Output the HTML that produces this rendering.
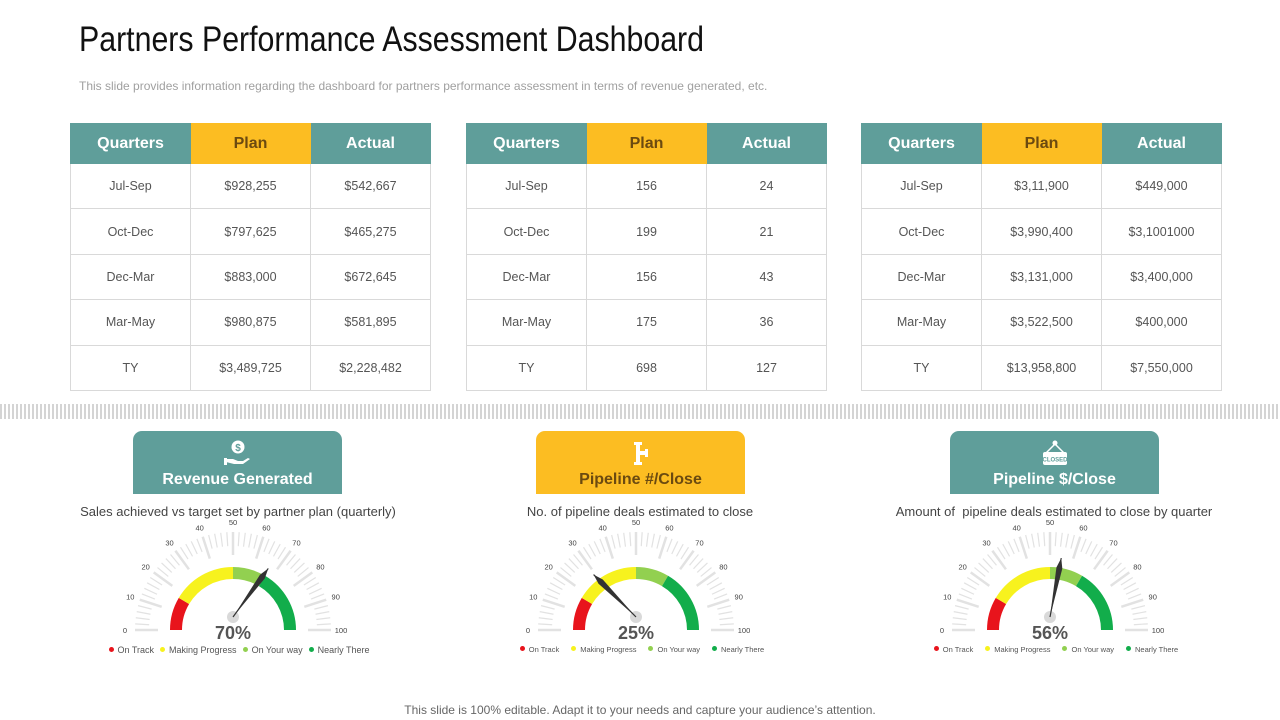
<!DOCTYPE html>
<html><head><meta charset="utf-8">
<style>
*{margin:0;padding:0;box-sizing:border-box}
body{width:1280px;height:720px;background:#fff;font-family:"Liberation Sans",sans-serif;position:relative;overflow:hidden}
.abs{position:absolute}
h1{position:absolute;left:79px;top:20px;font-weight:normal;font-size:35px;color:#111;white-space:nowrap;transform:scaleX(0.866);transform-origin:left top}
.sub{left:79px;top:79px;font-size:12px;color:#a0a0a0;white-space:nowrap}
table{position:absolute;border-collapse:collapse;width:361px;top:123px}
td,th{width:120px;text-align:center;border:1px solid #d9d9d9;font-size:12.5px;color:#555;height:45.4px}
th{height:40px;font-size:16px;font-weight:bold;color:#fff;background:#5f9e9a;border:1px solid #5f9e9a}
th.p{background:#fcbd22;color:#6b4a10;border-color:#fcbd22}
.stripe{left:0;top:404px;width:1280px;height:15px;background:repeating-linear-gradient(90deg,#d4d4d4 0 2px,#fff 2px 4px)}
.card{top:431px;width:209px;height:63px;border-radius:9px 9px 0 0;background:#5f9e9a;color:#fff;font-weight:bold;font-size:16px;text-align:center}
.card span{position:absolute;left:0;right:0;top:40px}
.card svg{position:absolute;left:50%;top:9px;transform:translateX(-50%)}
.desc{top:504px;font-size:13px;color:#444;text-align:center;white-space:nowrap}
.foot{left:0;width:1280px;top:703px;text-align:center;font-size:12px;color:#666}
</style></head><body>
<h1>Partners Performance Assessment Dashboard</h1>
<div class="abs sub">This slide provides information regarding the dashboard for partners performance assessment in terms of revenue generated, etc.</div>

<table style="left:70px"><tr><th>Quarters</th><th class="p">Plan</th><th>Actual</th></tr>
<tr><td>Jul-Sep</td><td>$928,255</td><td>$542,667</td></tr>
<tr><td>Oct-Dec</td><td>$797,625</td><td>$465,275</td></tr>
<tr><td>Dec-Mar</td><td>$883,000</td><td>$672,645</td></tr>
<tr><td>Mar-May</td><td>$980,875</td><td>$581,895</td></tr>
<tr><td>TY</td><td>$3,489,725</td><td>$2,228,482</td></tr></table>
<table style="left:466px"><tr><th>Quarters</th><th class="p">Plan</th><th>Actual</th></tr>
<tr><td>Jul-Sep</td><td>156</td><td>24</td></tr>
<tr><td>Oct-Dec</td><td>199</td><td>21</td></tr>
<tr><td>Dec-Mar</td><td>156</td><td>43</td></tr>
<tr><td>Mar-May</td><td>175</td><td>36</td></tr>
<tr><td>TY</td><td>698</td><td>127</td></tr></table>
<table style="left:861px"><tr><th>Quarters</th><th class="p">Plan</th><th>Actual</th></tr>
<tr><td>Jul-Sep</td><td>$3,11,900</td><td>$449,000</td></tr>
<tr><td>Oct-Dec</td><td>$3,990,400</td><td>$3,1001000</td></tr>
<tr><td>Dec-Mar</td><td>$3,131,000</td><td>$3,400,000</td></tr>
<tr><td>Mar-May</td><td>$3,522,500</td><td>$400,000</td></tr>
<tr><td>TY</td><td>$13,958,800</td><td>$7,550,000</td></tr></table>

<div class="abs stripe"></div>

<div class="abs card" style="left:133px">
<svg width="30" height="28" viewBox="0 0 30 28"><circle cx="15" cy="7" r="6.5" fill="#fff"/><text x="15" y="11" font-size="10" text-anchor="middle" fill="#5f9e9a" font-family="Liberation Sans" font-weight="bold">$</text><path d="M3 19h7l5 2h5l5-3 2 1-7 5h-9l-8-2z" fill="#fff"/><rect x="1" y="18" width="3" height="7" fill="#fff"/></svg>
<span>Revenue Generated</span></div>
<div class="abs card" style="left:536px;background:#fcbd22;color:#6b4a10">
<svg width="30" height="28" viewBox="0 0 30 28"><rect x="8" y="2" width="8" height="3" fill="#fff"/><rect x="10" y="5" width="4" height="18" fill="#fff"/><rect x="8" y="22" width="8" height="3" fill="#fff"/><rect x="14" y="11" width="5" height="4" fill="#fff"/><rect x="19" y="9" width="3" height="8" fill="#fff"/></svg>
<span>Pipeline #/Close</span></div>
<div class="abs card" style="left:950px">
<svg width="30" height="28" viewBox="0 0 30 28"><circle cx="15" cy="3" r="2.5" fill="#fff"/><path d="M15 4L6 13M15 4L24 13" stroke="#fff" stroke-width="1.5"/><rect x="3" y="12" width="24" height="13" rx="2" fill="#fff"/><text x="15" y="21.5" font-size="6" text-anchor="middle" fill="#5f9e9a" font-family="Liberation Sans">CLOSED</text></svg>
<span>Pipeline $/Close</span></div>

<div class="abs desc" style="left:0;width:476px">Sales achieved vs target set by partner plan (quarterly)</div>
<div class="abs desc" style="left:440px;width:400px">No. of pipeline deals estimated to close</div>
<div class="abs desc" style="left:854px;width:400px">Amount of &nbsp;pipeline deals estimated to close by quarter</div>

<div id="g"></div>
<div class="abs foot">This slide is 100% editable. Adapt it to your needs and capture your audience’s attention.</div>

<script>
function gauge(cx,val){
 const W=260,H=150,ox=130,oy=110;
 let s=`<svg class="abs" style="left:${cx-ox}px;top:${630-oy}px" width="${W}" height="${H}">`;
 const P=(a,r)=>[ox+r*Math.cos(a),oy-r*Math.sin(a)];
 for(let i=0;i<=50;i++){const a=Math.PI*(1-i/50);const maj=i%5==0;
  const [x1,y1]=P(a,maj?75:84),[x2,y2]=P(a,98);
  s+=`<line x1="${x1}" y1="${y1}" x2="${x2}" y2="${y2}" stroke="#e2e2e2" stroke-width="${maj?2.5:1.2}"/>`;
  if(maj){const [tx,ty]=P(a,108);s+=`<text x="${tx}" y="${ty+3}" font-size="7.5" text-anchor="middle" fill="#444" font-family="Liberation Sans">${i*2}</text>`;}}
 const seg=(f0,f1,c)=>{const a0=Math.PI*(1-f0),a1=Math.PI*(1-f1);const[x0,y0]=P(a0,57),[x1,y1]=P(a1,57);
  s+=`<path d="M${x0} ${y0}A57 57 0 0 1 ${x1} ${y1}" fill="none" stroke="${c}" stroke-width="12"/>`;};
 seg(0,0.17,'#e8141c');seg(0.17,0.5,'#f7f21e');seg(0.5,0.67,'#92d050');seg(0.67,1,'#12ad4b');
 const a=Math.PI*(1-val/100),px=ox,py=oy-13;
 const tx=px+60*Math.cos(a),ty=py-60*Math.sin(a),nx=-Math.sin(a),ny=-Math.cos(a);
 s+=`<circle cx="${px}" cy="${py}" r="6" fill="#d9d9d9"/>`;
 s+=`<polygon points="${px},${py} ${tx-Math.cos(a)*10+nx*3},${ty+Math.sin(a)*10+ny*3} ${tx},${ty} ${tx-Math.cos(a)*10-nx*3},${ty+Math.sin(a)*10-ny*3}" fill="#333"/>`;
 s+=`<line x1="${px}" y1="${py}" x2="${tx}" y2="${ty}" stroke="#333" stroke-width="1.2"/>`;
 s+=`<text x="${ox}" y="${oy+9}" font-size="18" font-weight="bold" text-anchor="middle" fill="#555" font-family="Liberation Sans">${val}%</text>`;
 s+='</svg>';
 return s;
}
let h=gauge(233,70)+gauge(636,25)+gauge(1050,56);
function legend(cx,sm){const fs=sm?7.5:9;
 return `<div class="abs" style="left:${cx-200}px;width:400px;top:645px;text-align:center;font-size:${fs}px;color:#555;white-space:nowrap">`+
 [['#e8141c','On Track'],['#f7f21e','Making Progress'],['#92d050','On Your way'],['#12ad4b','Nearly There']].map(l=>`<span style="display:inline-block;width:5px;height:5px;border-radius:50%;background:${l[0]};margin:0 4px 1px ${sm?12:6}px"></span>${l[1]}`).join('')+'</div>';}
h+=legend(236,false)+legend(636,true)+legend(1050,true);
document.getElementById('g').innerHTML=h;
</script>
</body></html>
